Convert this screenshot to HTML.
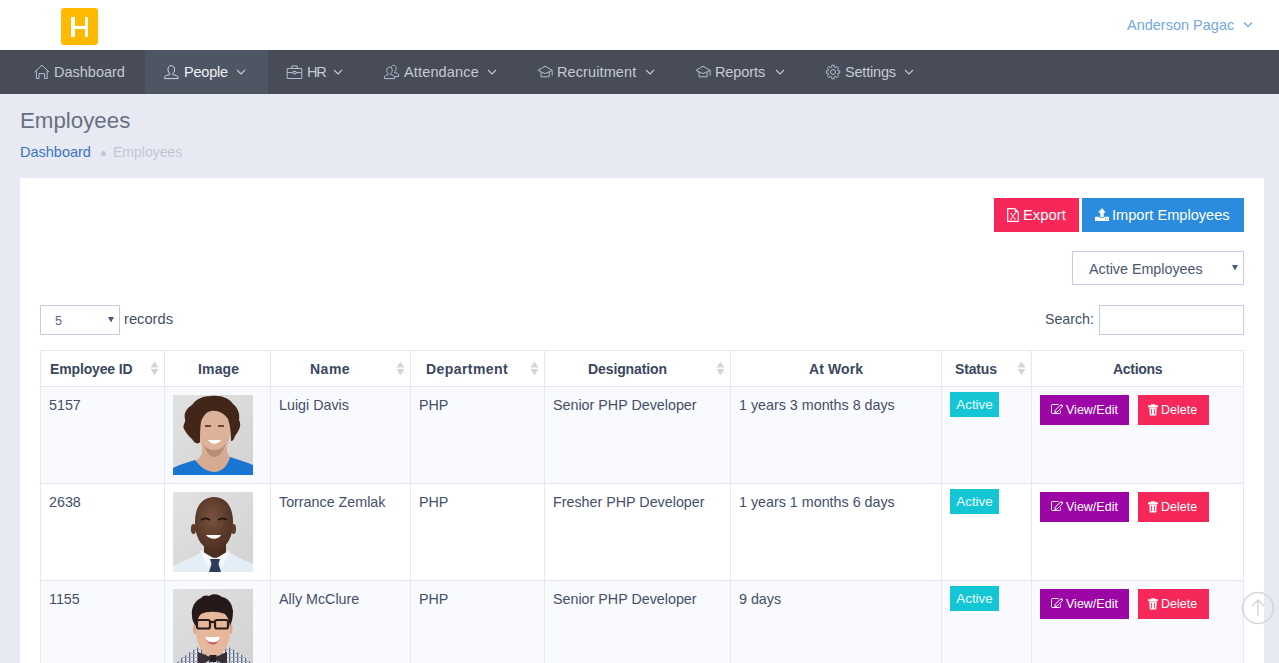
<!DOCTYPE html>
<html><head><meta charset="utf-8">
<style>
*{box-sizing:border-box;margin:0;padding:0}
html,body{width:1279px;height:663px;overflow:hidden}
body{font-family:"Liberation Sans",sans-serif;background:#e8eaf3;position:relative;color:#4b5467}
.abs{position:absolute;white-space:nowrap}
#hdr{position:absolute;left:0;top:0;width:1279px;height:50px;background:#fff}
#logo{position:absolute;left:61px;top:8px;width:37px;height:37px;background:#ffb900;border-radius:3px}
#logo i{position:absolute;background:#fff}
#user{position:absolute;left:1127px;top:17px;font-size:14.5px;color:#74a8de}
#nav{position:absolute;left:0;top:50px;width:1279px;height:44px;background:#474c57}
#nav .act{position:absolute;left:145px;top:0;width:123px;height:44px;background:#4e5664}
.ni{position:absolute;top:14px;font-size:14.5px;color:#c5cad6}
.nic{position:absolute;top:0}
.chev{position:absolute;top:19px}
#title{left:20px;top:108px;font-size:22.3px;color:#687183}
#bc1{left:20px;top:144px;font-size:14.5px;color:#3a76c2}
#bcdot{position:absolute;left:100.5px;top:151px;width:5px;height:5px;border-radius:50%;background:#c3c8d6}
#bc2{left:113px;top:144px;font-size:14px;color:#c2c6d2}
#card{position:absolute;left:20px;top:178px;width:1244px;height:500px;background:#fff}
.btn{position:absolute;color:#fff;white-space:nowrap}
.hd{position:absolute;top:361px;margin-left:1px;font-size:14px;font-weight:bold;color:#3a475f;white-space:nowrap}
.srt{position:absolute;top:361px}
.vl{position:absolute;top:350px;width:1px;height:313px;background:#e4e6f0}
.hl{position:absolute;left:40px;width:1204px;height:1px;background:#e4e6f0}
.td{position:absolute;margin:1px 0 0 0;font-size:14.3px;color:#434f68;white-space:nowrap}
.badge{position:absolute;left:950px;width:49px;height:25px;background:#14c6d3;color:#eafcfd;font-size:13.4px;line-height:25px;text-align:center}
.be{position:absolute;left:1040px;width:89px;height:30px;background:#9c06a6;color:#fff;font-size:12.5px;line-height:30px}
.bd{position:absolute;left:1138px;width:71px;height:30px;background:#f6285a;color:#fff;font-size:12.5px;line-height:30px}
.ph{position:absolute;left:173px;width:80px;height:80px;overflow:hidden;background:#d8d8d8}

</style></head><body>
<div id="hdr">
  <div id="logo"><i style="left:10px;top:9px;width:3.5px;height:20px"></i><i style="left:23.5px;top:9px;width:3.5px;height:20px"></i><i style="left:13px;top:18px;width:11px;height:2.8px"></i></div>
  <div id="user">Anderson Pagac</div>
  <svg class="abs" style="left:1243px;top:21px" width="10" height="7" viewBox="0 0 10 7"><path d="M1 1.5 L5 5.5 L9 1.5" fill="none" stroke="#74a8de" stroke-width="1.3"/></svg>
</div>
<div id="nav">
  <div class="act"></div>
  <svg class="abs" style="left:34px;top:14px" width="16" height="16" viewBox="0 0 16 16"><path d="M0.7 8 L7.9 1.2 L15 8 M2.4 6.4 V14.5 H5 V9.6 H10.6 V14.5 H13.2 V6.4" fill="none" stroke="#b3bdd0" stroke-width="1" stroke-linejoin="miter"/></svg>
  <div class="ni" style="left:54px">Dashboard</div>
  <svg class="abs" style="left:163px;top:14px" width="17" height="16" viewBox="0 0 17 16"><path d="M8.3 1.6 C5.8 1.6 5 3.6 5 5.5 C5 7.6 6 9.1 6.9 9.5 L6.9 10.6 C4 11.1 1.5 12 1.5 13.4 V14.6 H15.1 V13.4 C15.1 12 12.6 11.1 9.7 10.6 V9.5 C10.6 9.1 11.6 7.6 11.6 5.5 C11.6 3.6 10.8 1.6 8.3 1.6 Z" fill="none" stroke="#d3d8e2" stroke-width="1"/></svg>
  <div class="ni" style="left:184px;color:#eef0f4;letter-spacing:-0.2px">People</div>
  <svg class="abs chev" style="left:236px" width="10" height="6" viewBox="0 0 10 6"><path d="M1 1 L5 5 L9 1" fill="none" stroke="#c5cad6" stroke-width="1.1"/></svg>
  <svg class="abs" style="left:286px;top:14px" width="17" height="16" viewBox="0 0 17 16"><path d="M1.2 4.5 H15.8 V14.5 H1.2 Z M5.8 4.5 V2 H11.2 V4.5 M1.2 8.6 H7 M10 8.6 H15.8 M7 7.4 H10 V9.8 H7 Z" fill="none" stroke="#b3bdd0" stroke-width="1"/></svg>
  <div class="ni" style="left:307px;letter-spacing:-1.2px">HR</div>
  <svg class="abs chev" style="left:333px" width="10" height="6" viewBox="0 0 10 6"><path d="M1 1 L5 5 L9 1" fill="none" stroke="#c5cad6" stroke-width="1.1"/></svg>
  <svg class="abs" style="left:383px;top:14px" width="17" height="16" viewBox="0 0 17 16"><path d="M6.5 3.2 C4.6 3.2 3.8 4.8 3.8 6.4 C3.8 8 4.6 9.2 5.3 9.6 V10.6 C3 11 1.4 11.8 1.4 13 V14.6 H11.6 V13 C11.6 11.8 10 11 7.7 10.6 V9.6 C8.4 9.2 9.2 8 9.2 6.4 C9.2 4.8 8.4 3.2 6.5 3.2 Z M8.2 3.4 C8.6 1.8 9.6 1.2 10.6 1.2 C12.4 1.2 13.2 2.8 13.2 4.4 C13.2 6 12.4 7.2 11.7 7.6 V8.6 C14 9 15.6 9.8 15.6 11 V12.6 H12" fill="none" stroke="#b3bdd0" stroke-width="1"/></svg>
  <div class="ni" style="left:404px;letter-spacing:0.15px">Attendance</div>
  <svg class="abs chev" style="left:487px" width="10" height="6" viewBox="0 0 10 6"><path d="M1 1 L5 5 L9 1" fill="none" stroke="#c5cad6" stroke-width="1.1"/></svg>
  <svg class="abs" style="left:537px;top:15px" width="16" height="14" viewBox="0 0 16 14"><path d="M1 5.4 L8 1.2 L15.2 5.4 L8 8.6 Z M4 6.9 V11.8 H12.2 V6.9 M15.2 5.4 V10.6" fill="none" stroke="#b3bdd0" stroke-width="1" stroke-linejoin="miter"/></svg>
  <div class="ni" style="left:557px;letter-spacing:0.1px">Recruitment</div>
  <svg class="abs chev" style="left:645px" width="10" height="6" viewBox="0 0 10 6"><path d="M1 1 L5 5 L9 1" fill="none" stroke="#c5cad6" stroke-width="1.1"/></svg>
  <svg class="abs" style="left:695px;top:15px" width="16" height="14" viewBox="0 0 16 14"><path d="M1 5.4 L8 1.2 L15.2 5.4 L8 8.6 Z M4 6.9 V11.8 H12.2 V6.9 M15.2 5.4 V10.6" fill="none" stroke="#b3bdd0" stroke-width="1" stroke-linejoin="miter"/></svg>
  <div class="ni" style="left:715px;letter-spacing:-0.1px">Reports</div>
  <svg class="abs chev" style="left:775px" width="10" height="6" viewBox="0 0 10 6"><path d="M1 1 L5 5 L9 1" fill="none" stroke="#c5cad6" stroke-width="1.1"/></svg>
  <svg class="abs" style="left:824.5px;top:14px" width="16" height="16" viewBox="0 0 16 16"><g fill="none" stroke="#b3bdd0" stroke-width="1"><circle cx="8" cy="8" r="2.4"/><path d="M6.67 3.18 L6.83 1.20 L9.17 1.20 L9.33 3.18 L10.46 3.65 L11.98 2.37 L13.63 4.02 L12.35 5.54 L12.82 6.67 L14.80 6.83 L14.80 9.17 L12.82 9.33 L12.35 10.46 L13.63 11.98 L11.98 13.63 L10.46 12.35 L9.33 12.82 L9.17 14.80 L6.83 14.80 L6.67 12.82 L5.54 12.35 L4.02 13.63 L2.37 11.98 L3.65 10.46 L3.18 9.33 L1.20 9.17 L1.20 6.83 L3.18 6.67 L3.65 5.54 L2.37 4.02 L4.02 2.37 L5.54 3.65 Z" stroke-linejoin="miter"/></g></svg>
  <div class="ni" style="left:845px;letter-spacing:-0.2px">Settings</div>
  <svg class="abs chev" style="left:904px" width="10" height="6" viewBox="0 0 10 6"><path d="M1 1 L5 5 L9 1" fill="none" stroke="#c5cad6" stroke-width="1.1"/></svg>
</div>
<div class="abs" id="title">Employees</div>
<div class="abs" id="bc1">Dashboard</div>
<div id="bcdot"></div>
<div class="abs" id="bc2">Employees</div>
<div id="card"></div>
<div class="btn" style="left:994px;top:198px;width:85px;height:34px;background:#f6285a"></div>
<svg class="abs" style="left:1007px;top:208px" width="12" height="14" viewBox="0 0 12 14"><path d="M0.7 0.7 H7.8 L11.3 4.2 V13.3 H0.7 Z" fill="none" stroke="#fff" stroke-width="1.2"/><path d="M7.8 0.7 L11.3 4.2 H7.8 Z" fill="#fff"/><path d="M3.3 5.6 H5 M7 5.6 H8.7 M3.3 11 H5 M7 11 H8.7 M4.2 5.6 L7.8 11 M7.8 5.6 L4.2 11" stroke="#fff" stroke-width="0.9" fill="none"/></svg>
<div class="btn" style="left:1023px;top:207px;font-size:14.8px">Export</div>
<div class="btn" style="left:1082px;top:198px;width:162px;height:34px;background:#2a8bdf"></div>
<svg class="abs" style="left:1095px;top:208px" width="14" height="13" viewBox="0 0 14 13"><path d="M7 0.3 L11 4.5 H8.7 V9 H5.3 V4.5 H3 Z" fill="#fff"/><path d="M0 8.7 H4.5 V9.7 H9.5 V8.7 H14 V13 H0 Z" fill="#fff"/><path d="M10 11 H13" stroke="#2a8bdf" stroke-width="0.8" stroke-dasharray="1 0.8"/></svg>
<div class="btn" style="left:1112px;top:207px;font-size:14.6px">Import Employees</div>
<div class="abs" style="left:1072px;top:251px;width:172px;height:34px;border:1px solid #c9cbe3;background:#fff"></div>
<div class="abs" style="left:1089px;top:261px;font-size:14.3px;color:#4b5670">Active Employees</div>
<svg class="abs" style="left:1232px;top:265px" width="6" height="6" viewBox="0 0 6 6"><path d="M0 0 H6 L3 5.5 Z" fill="#4c5a78"/></svg>
<div class="abs" style="left:40px;top:305px;width:80px;height:30px;border:1px solid #c9cbe3;background:#fff"></div>
<div class="abs" style="left:55px;top:314px;font-size:12.5px;color:#5a6580">5</div>
<svg class="abs" style="left:108px;top:317px" width="6" height="6" viewBox="0 0 6 6"><path d="M0 0 H6 L3 5.5 Z" fill="#4c5a78"/></svg>
<div class="abs" style="left:124px;top:311px;font-size:14.7px;color:#434f68">records</div>
<div class="abs" style="left:1045px;top:311px;font-size:14.2px;color:#434f68">Search:</div>
<div class="abs" style="left:1099px;top:305px;width:145px;height:30px;border:1px solid #c9cbe3;background:#fff"></div>
<div class="abs" style="left:41px;top:387px;width:1202px;height:96px;background:#f9fafd"></div>
<div class="abs" style="left:41px;top:581px;width:1202px;height:82px;background:#f9fafd"></div>
<div class="vl" style="left:40px"></div>
<div class="vl" style="left:164px"></div>
<div class="vl" style="left:270px"></div>
<div class="vl" style="left:410px"></div>
<div class="vl" style="left:544px"></div>
<div class="vl" style="left:730px"></div>
<div class="vl" style="left:941px"></div>
<div class="vl" style="left:1031px"></div>
<div class="vl" style="left:1243px"></div>
<div class="hl" style="top:350px"></div>
<div class="hl" style="top:386px"></div>
<div class="hl" style="top:483px"></div>
<div class="hl" style="top:580px"></div>
<div class="hd" style="left:49px;letter-spacing:-0.15px">Employee ID</div>
<svg class="srt" style="left:150px" width="9" height="15" viewBox="0 0 9 15"><path d="M4.5 0.5 L8.5 6.5 H0.5 Z M0.5 8 H8.5 L4.5 14.5 Z" fill="#d4d5d9"/></svg>
<div class="hd" style="left:197px;letter-spacing:0.16px">Image</div>
<div class="hd" style="left:309px;letter-spacing:0.50px">Name</div>
<svg class="srt" style="left:396px" width="9" height="15" viewBox="0 0 9 15"><path d="M4.5 0.5 L8.5 6.5 H0.5 Z M0.5 8 H8.5 L4.5 14.5 Z" fill="#d4d5d9"/></svg>
<div class="hd" style="left:425px;letter-spacing:0.43px">Department</div>
<svg class="srt" style="left:530px" width="9" height="15" viewBox="0 0 9 15"><path d="M4.5 0.5 L8.5 6.5 H0.5 Z M0.5 8 H8.5 L4.5 14.5 Z" fill="#d4d5d9"/></svg>
<div class="hd" style="left:587px;letter-spacing:-0.10px">Designation</div>
<svg class="srt" style="left:716px" width="9" height="15" viewBox="0 0 9 15"><path d="M4.5 0.5 L8.5 6.5 H0.5 Z M0.5 8 H8.5 L4.5 14.5 Z" fill="#d4d5d9"/></svg>
<div class="hd" style="left:808px;letter-spacing:0.12px">At Work</div>
<div class="hd" style="left:954px;letter-spacing:-0.16px">Status</div>
<svg class="srt" style="left:1017px" width="9" height="15" viewBox="0 0 9 15"><path d="M4.5 0.5 L8.5 6.5 H0.5 Z M0.5 8 H8.5 L4.5 14.5 Z" fill="#d4d5d9"/></svg>
<div class="hd" style="left:1112px;letter-spacing:-0.30px">Actions</div>
<div class="td" style="left:49px;top:396px">5157</div>
<div class="td" style="left:279px;top:396px">Luigi Davis</div>
<div class="td" style="left:419px;top:396px">PHP</div>
<div class="td" style="left:553px;top:396px">Senior PHP Developer</div>
<div class="td" style="left:739px;top:396px">1 years 3 months 8 days</div>
<div class="ph" style="top:395px" id="ph0"><svg width="80" height="80" viewBox="0 0 80 80"><defs><linearGradient id="bg0" x1="0" y1="0" x2="1" y2="1"><stop offset="0" stop-color="#e2e2e2"/><stop offset="1" stop-color="#d2d2d2"/></linearGradient></defs><rect width="80" height="80" fill="url(#bg0)"/><path d="M29 52 C30 60 27 64 20 67 L42 80 L62 67 C56 62 53 58 54 50 Z" fill="#d6ab92"/><path d="M0 73 C8 69 16 67 22 65 C28 73 35 77 42 77 C50 76 55 70 57 62 C64 64 73 67 80 70 V80 H0 Z" fill="#1a74d2"/><path d="M41 13 C31 13 26 23 26 36 C26 50 32 62 41 62 C50 62 57 50 57 36 C57 23 51 13 41 13 Z" fill="#dcb29a"/><path d="M30 48 C33 58 37 62 41 62 C46 62 50 58 53 48 C50 53 46 55 41 55 C36 55 32 53 30 48 Z" fill="#a9826c" opacity="0.75"/><path d="M12 24 C10 18 15 12 19 10 C23 4 30 1 38 1 C48 0 56 3 60 9 C65 13 67 19 66 25 C69 30 66 36 62 41 C61 44 60 46 58 46 C58 38 57 30 55 24 C51 18 45 15 38 16 C33 17 30 21 28 27 C27 33 27 40 27 47 C25 50 21 48 19 44 C15 41 13 37 11 34 C9 30 13 28 12 24 Z" fill="#412619"/><path d="M32 31 H38 M45 31 H51" stroke="#6a4536" stroke-width="1.8"/><path d="M35 45 C38 50 45 50 48 45 Z" fill="#fff"/></svg></div>
<div class="badge" style="top:392px">Active</div>
<div class="be" style="top:395px"><svg style="position:absolute;left:11px;top:9px" width="13" height="11" viewBox="0 0 13 11"><path d="M9.5 6.5 V8.5 Q9.5 9.5 8.5 9.5 H1.5 Q0.5 9.5 0.5 8.5 V1.5 Q0.5 0.5 1.5 0.5 H7.5" fill="none" stroke="#fff" stroke-width="1"/><path d="M4.2 6.3 L9.6 0.9 L11.4 2.7 L6 8.1 L3.9 8.5 Z" fill="none" stroke="#fff" stroke-width="1"/><path d="M9.6 0.9 L11.4 2.7 L12.2 1.9 L10.4 0.1 Z" fill="#fff"/></svg><span style="position:absolute;left:26px">View/Edit</span></div>
<div class="bd" style="top:395px"><svg style="position:absolute;left:10px;top:9px" width="10" height="12" viewBox="0 0 10 12"><path d="M0.3 1.6 H9.7 V3 H0.3 Z M3.3 1.6 V0.4 H6.7 V1.6" fill="#fff" stroke="#fff" stroke-width="0.6"/><path d="M1.3 3.6 H8.7 L8.2 11.6 H1.8 Z" fill="#fff"/><path d="M3.6 4.8 V10.4 M6.4 4.8 V10.4" stroke="#f6285a" stroke-width="0.9"/></svg><span style="position:absolute;left:23px">Delete</span></div>
<div class="td" style="left:49px;top:493px">2638</div>
<div class="td" style="left:279px;top:493px">Torrance Zemlak</div>
<div class="td" style="left:419px;top:493px">PHP</div>
<div class="td" style="left:553px;top:493px">Fresher PHP Developer</div>
<div class="td" style="left:739px;top:493px">1 years 1 months 6 days</div>
<div class="ph" style="top:492px" id="ph1"><svg width="80" height="80" viewBox="0 0 80 80"><defs><linearGradient id="bg1" x1="0" y1="0" x2="1" y2="1"><stop offset="0" stop-color="#e2e2e2"/><stop offset="1" stop-color="#d2d2d2"/></linearGradient><radialGradient id="sk1" cx="0.45" cy="0.4" r="0.6"><stop offset="0" stop-color="#7a5240"/><stop offset="1" stop-color="#4e3022"/></radialGradient></defs><rect width="80" height="80" fill="url(#bg1)"/><path d="M0 74 C8 70 20 66 28 60 L42 68 L56 60 C64 66 72 68 80 72 V80 H0 Z" fill="#e4eef7"/><path d="M31 50 H53 V62 C49 67 35 67 31 62 Z" fill="#4a2e22"/><path d="M27 58 L35 76 L42 67 Z M57 58 L49 76 L42 67 Z" fill="#f4f8fb"/><path d="M37 67 H47 L45.5 72 L48 80 H36 L38.5 72 Z" fill="#2f3c57"/><ellipse cx="20.5" cy="37" rx="2.6" ry="5" fill="#5e3d2c"/><ellipse cx="60.5" cy="37" rx="2.6" ry="5" fill="#5e3d2c"/><path d="M41 5 C29 5 22 15 22 30 C22 47 30 58 41 58 C52 58 60 47 60 30 C60 15 53 5 41 5 Z" fill="url(#sk1)"/><path d="M28 28 C31 26 34 26 37 28 M45 28 C48 26 51 26 54 28" stroke="#24150f" stroke-width="2" fill="none"/><path d="M33 43 C37 48 45 48 48 43 Z" fill="#fff"/></svg></div>
<div class="badge" style="top:489px">Active</div>
<div class="be" style="top:492px"><svg style="position:absolute;left:11px;top:9px" width="13" height="11" viewBox="0 0 13 11"><path d="M9.5 6.5 V8.5 Q9.5 9.5 8.5 9.5 H1.5 Q0.5 9.5 0.5 8.5 V1.5 Q0.5 0.5 1.5 0.5 H7.5" fill="none" stroke="#fff" stroke-width="1"/><path d="M4.2 6.3 L9.6 0.9 L11.4 2.7 L6 8.1 L3.9 8.5 Z" fill="none" stroke="#fff" stroke-width="1"/><path d="M9.6 0.9 L11.4 2.7 L12.2 1.9 L10.4 0.1 Z" fill="#fff"/></svg><span style="position:absolute;left:26px">View/Edit</span></div>
<div class="bd" style="top:492px"><svg style="position:absolute;left:10px;top:9px" width="10" height="12" viewBox="0 0 10 12"><path d="M0.3 1.6 H9.7 V3 H0.3 Z M3.3 1.6 V0.4 H6.7 V1.6" fill="#fff" stroke="#fff" stroke-width="0.6"/><path d="M1.3 3.6 H8.7 L8.2 11.6 H1.8 Z" fill="#fff"/><path d="M3.6 4.8 V10.4 M6.4 4.8 V10.4" stroke="#f6285a" stroke-width="0.9"/></svg><span style="position:absolute;left:23px">Delete</span></div>
<div class="td" style="left:49px;top:590px">1155</div>
<div class="td" style="left:279px;top:590px">Ally McClure</div>
<div class="td" style="left:419px;top:590px">PHP</div>
<div class="td" style="left:553px;top:590px">Senior PHP Developer</div>
<div class="td" style="left:739px;top:590px">9 days</div>
<div class="ph" style="top:589px" id="ph2"><svg width="80" height="80" viewBox="0 0 80 80"><defs><linearGradient id="bg2" x1="0" y1="0" x2="1" y2="1"><stop offset="0" stop-color="#e0e0e0"/><stop offset="1" stop-color="#d2d2d2"/></linearGradient><pattern id="chk" width="4" height="4" patternUnits="userSpaceOnUse"><rect width="4" height="4" fill="#e2e6ee"/><rect width="1.3" height="4" fill="#5a6274"/><rect width="4" height="0.8" fill="#9aa2b4"/></pattern></defs><rect width="80" height="80" fill="url(#bg2)"/><path d="M0 80 C4 70 16 64 27 57 L40 66 L54 57 C66 64 76 70 80 76 V80 Z" fill="url(#chk)"/><path d="M28 50 H53 V60 C49 65 32 65 28 60 Z" fill="#d9a58a"/><ellipse cx="22.5" cy="40" rx="2.6" ry="5" fill="#dca88c"/><ellipse cx="57" cy="40" rx="2.6" ry="5" fill="#dca88c"/><path d="M40 18 C28 18 23 30 23 42 C23 56 31 68 40 68 C49 68 57 56 57 42 C57 30 52 18 40 18 Z" fill="#e7b79b"/><path d="M19 27 C18 18 22 12 28 9 C30 6 34 6 36 7 C40 4 46 5 49 8 C55 9 59 14 60 22 C60 28 59 33 57 37 C56 32 55 28 52 25 C44 22 34 22 28 25 C25 28 24 33 23 37 C20 34 19 30 19 27 Z" fill="#26191a"/><g fill="none" stroke="#2a1c18" stroke-width="2.2"><rect x="24" y="31" width="13" height="8.5" rx="2"/><rect x="42" y="31" width="13" height="8.5" rx="2"/><path d="M37 33 H42"/></g><path d="M32 48 C36 56 44 56 47 48 Z" fill="#fff"/><path d="M33 51 C37 57 43 57 46 51 C44 54 36 54 33 51 Z" fill="#c8606a"/><path d="M25 63 L40 69 L25 78 Z M54 63 L40 69 L54 78 Z" fill="#3b2f36"/><rect x="36.5" y="66" width="7" height="7" fill="#2a2028"/></svg></div>
<div class="badge" style="top:586px">Active</div>
<div class="be" style="top:589px"><svg style="position:absolute;left:11px;top:9px" width="13" height="11" viewBox="0 0 13 11"><path d="M9.5 6.5 V8.5 Q9.5 9.5 8.5 9.5 H1.5 Q0.5 9.5 0.5 8.5 V1.5 Q0.5 0.5 1.5 0.5 H7.5" fill="none" stroke="#fff" stroke-width="1"/><path d="M4.2 6.3 L9.6 0.9 L11.4 2.7 L6 8.1 L3.9 8.5 Z" fill="none" stroke="#fff" stroke-width="1"/><path d="M9.6 0.9 L11.4 2.7 L12.2 1.9 L10.4 0.1 Z" fill="#fff"/></svg><span style="position:absolute;left:26px">View/Edit</span></div>
<div class="bd" style="top:589px"><svg style="position:absolute;left:10px;top:9px" width="10" height="12" viewBox="0 0 10 12"><path d="M0.3 1.6 H9.7 V3 H0.3 Z M3.3 1.6 V0.4 H6.7 V1.6" fill="#fff" stroke="#fff" stroke-width="0.6"/><path d="M1.3 3.6 H8.7 L8.2 11.6 H1.8 Z" fill="#fff"/><path d="M3.6 4.8 V10.4 M6.4 4.8 V10.4" stroke="#f6285a" stroke-width="0.9"/></svg><span style="position:absolute;left:23px">Delete</span></div>
<svg class="abs" style="left:1241px;top:591px" width="34" height="34" viewBox="0 0 34 34"><circle cx="17" cy="17" r="15.5" fill="none" stroke="#d3d7df" stroke-width="1.6"/><path d="M17 25 V9 M11 15 L17 9 L23 15" fill="none" stroke="#d3d7df" stroke-width="1.5"/></svg>
</body></html>
